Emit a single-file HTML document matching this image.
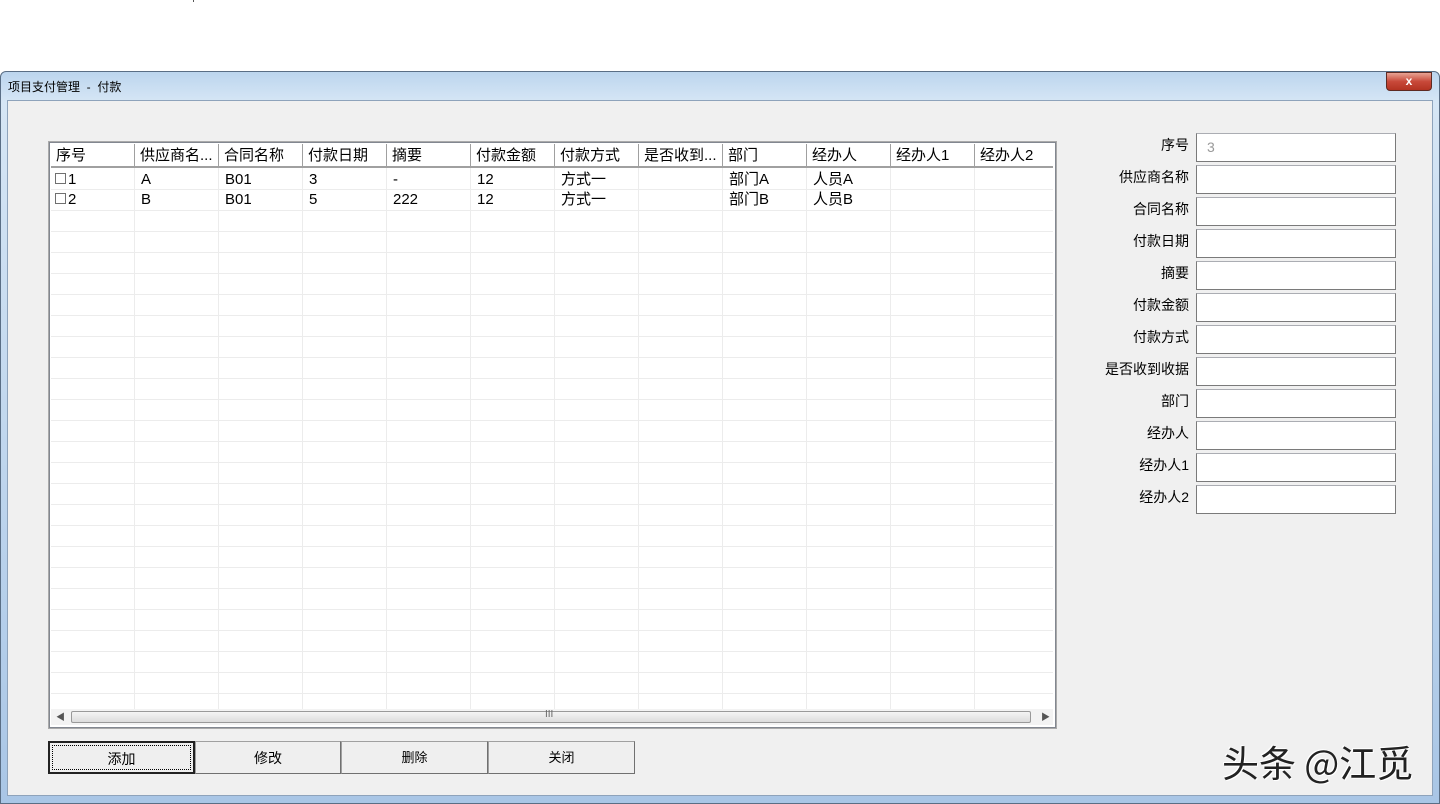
<!DOCTYPE html>
<html><head><meta charset="utf-8"><style>
*{margin:0;padding:0;box-sizing:border-box}
body{width:1440px;height:804px;background:#fff;position:relative;overflow:hidden;font-family:"Liberation Sans","Microsoft YaHei","Noto Sans CJK SC",sans-serif;font-size:14px;color:#000}
.a{position:absolute}
.frame{left:0;top:71px;width:1440px;height:733px;background:linear-gradient(#bcd5ee,#d6e6f5 30px,#a9c6e6);border:1px solid #5a6e85;border-radius:6px 6px 0 0}
.title{left:8px;top:78px;font-size:12px}
.close{left:1386px;top:72px;width:46px;height:19px;background:linear-gradient(#e8a394,#c8493a 50%,#b33322);border:1px solid #5e2a22;border-radius:0 0 4px 4px;color:#fff;font-size:12px;font-weight:bold;text-align:center;line-height:16px}
.client{left:7px;top:100px;width:1426px;height:696px;background:#f0f0f0;border:1px solid #8ea3bb}
.grid{left:49px;top:142px;width:1007px;height:586px;border:1px solid #828790;background:#fff;outline:1px solid #aaa}
.body{left:51px;top:168px;width:1002px;height:541px;background-image:repeating-linear-gradient(90deg,transparent 0 83px,#ececec 83px 84px),repeating-linear-gradient(180deg,transparent 0 20px,#ececec 20px 21px);background-position:0 0,0 1px}
.hdr{left:51px;top:144px;width:1002px;height:24px;background:#fff;border-bottom:2px solid #a0a0a0}
.hc{position:absolute;top:0;height:22px;border-right:1px solid #a0a0a0;padding-left:5px;line-height:24px;font-size:15px;white-space:nowrap}
.cell{position:absolute;font-size:15px;line-height:20px}
.cb{display:inline-block;width:11px;height:11px;border:1px solid #707070;background:#fff;vertical-align:0px;margin-right:2px}
.sb{left:51px;top:709px;width:1002px;height:16px;background:#f3f3f3}
.thumb{left:71px;top:711px;width:960px;height:12px;border:1px solid #999;border-radius:2px;background:linear-gradient(#f4f4f4,#dcdcdc)}
.btn{position:absolute;top:741px;height:33px;background:#efefef;border:1px solid #a0a0a0;border-right-color:#707070;border-bottom-color:#707070;text-align:center;line-height:32px;font-size:14px}
.lbl{position:absolute;right:251px;font-size:14px;text-align:right}
.inp{position:absolute;left:1196px;width:200px;height:29px;background:#fff;border:1px solid #7a7a7a;border-top-color:#abadb3}
.wm{left:1222px;top:734px;font-size:37px;color:#222;font-family:"Noto Sans CJK SC",sans-serif;text-shadow:1px 1px 0 #fff,-1px -1px 0 #fff}
</style></head><body>
<div class="a" style="left:193px;top:0;width:1px;height:2px;background:#555"></div>
<div class="a frame"></div>
<div class="a title">项目支付管理 &nbsp;- &nbsp;付款</div>
<div class="a close">x</div>
<div class="a client"></div>
<div class="a grid"></div>
<div class="a body"></div>
<div class="a hdr">
<div class="hc" style="left:0;width:84px">序号</div>
<div class="hc" style="left:84px;width:84px">供应商名...</div>
<div class="hc" style="left:168px;width:84px">合同名称</div>
<div class="hc" style="left:252px;width:84px">付款日期</div>
<div class="hc" style="left:336px;width:84px">摘要</div>
<div class="hc" style="left:420px;width:84px">付款金额</div>
<div class="hc" style="left:504px;width:84px">付款方式</div>
<div class="hc" style="left:588px;width:84px">是否收到...</div>
<div class="hc" style="left:672px;width:84px">部门</div>
<div class="hc" style="left:756px;width:84px">经办人</div>
<div class="hc" style="left:840px;width:84px">经办人1</div>
<div class="hc" style="left:924px;width:78px;border-right:none">经办人2</div>
</div>
<div class="cell" style="left:55px;top:170px"><span class="cb"></span>1</div>
<div class="cell" style="left:141px;top:170px">A</div>
<div class="cell" style="left:225px;top:170px">B01</div>
<div class="cell" style="left:309px;top:170px">3</div>
<div class="cell" style="left:393px;top:170px">-</div>
<div class="cell" style="left:477px;top:170px">12</div>
<div class="cell" style="left:561px;top:170px">方式一</div>
<div class="cell" style="left:729px;top:170px">部门A</div>
<div class="cell" style="left:813px;top:170px">人员A</div>
<div class="cell" style="left:55px;top:190px"><span class="cb"></span>2</div>
<div class="cell" style="left:141px;top:190px">B</div>
<div class="cell" style="left:225px;top:190px">B01</div>
<div class="cell" style="left:309px;top:190px">5</div>
<div class="cell" style="left:393px;top:190px">222</div>
<div class="cell" style="left:477px;top:190px">12</div>
<div class="cell" style="left:561px;top:190px">方式一</div>
<div class="cell" style="left:729px;top:190px">部门B</div>
<div class="cell" style="left:813px;top:190px">人员B</div>
<div class="a sb"></div>
<div class="a thumb"></div>
<div class="a" style="left:56px;top:710px;font-size:9px;color:#555">◀</div>
<div class="a" style="left:1041px;top:710px;font-size:9px;color:#555">▶</div>
<div class="a" style="left:545px;top:709px;font-size:10px;color:#666">III</div>
<div class="btn" style="left:48px;width:147px;border:2px solid #222"><div style="position:absolute;left:2px;top:2px;right:2px;bottom:2px;border:1px dotted #000"></div>添加</div>
<div class="btn" style="left:195px;width:146px">修改</div>
<div class="btn" style="left:341px;width:147px;font-size:13px">删除</div>
<div class="btn" style="left:488px;width:147px;font-size:13px">关闭</div>
<div class="lbl" style="top:135px">序号</div>
<div class="lbl" style="top:167px">供应商名称</div>
<div class="lbl" style="top:199px">合同名称</div>
<div class="lbl" style="top:231px">付款日期</div>
<div class="lbl" style="top:263px">摘要</div>
<div class="lbl" style="top:295px">付款金额</div>
<div class="lbl" style="top:327px">付款方式</div>
<div class="lbl" style="top:359px">是否收到收据</div>
<div class="lbl" style="top:391px">部门</div>
<div class="lbl" style="top:423px">经办人</div>
<div class="lbl" style="top:455px">经办人1</div>
<div class="lbl" style="top:487px">经办人2</div>
<div class="inp" style="top:133px;color:#999;padding-left:10px;line-height:26px">3</div>
<div class="inp" style="top:165px"></div>
<div class="inp" style="top:197px"></div>
<div class="inp" style="top:229px"></div>
<div class="inp" style="top:261px"></div>
<div class="inp" style="top:293px"></div>
<div class="inp" style="top:325px"></div>
<div class="inp" style="top:357px"></div>
<div class="inp" style="top:389px"></div>
<div class="inp" style="top:421px"></div>
<div class="inp" style="top:453px"></div>
<div class="inp" style="top:485px"></div>
<div class="a wm">头条 @江觅</div>
</body></html>
